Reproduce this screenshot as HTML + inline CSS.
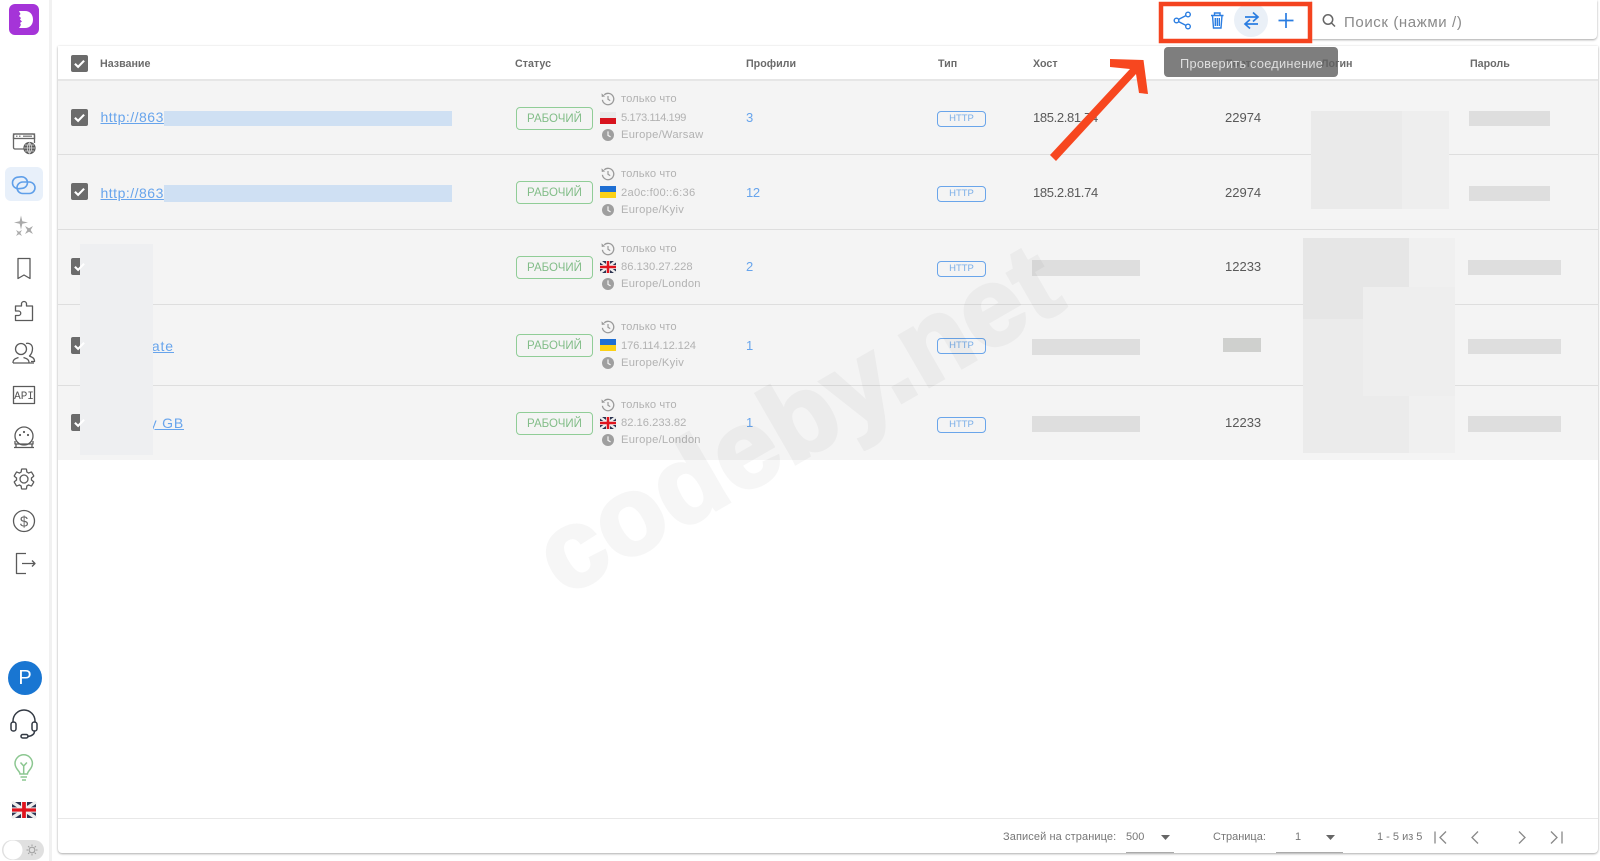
<!DOCTYPE html>
<html lang="ru">
<head>
<meta charset="utf-8">
<title>Прокси</title>
<style>
html,body{margin:0;padding:0;background:#fff}
#p{position:relative;width:1600px;height:861px;overflow:hidden;background:#fff;font-family:"Liberation Sans",sans-serif;color:#555}
#p div,#p a,#p span.a{position:absolute}
.t{white-space:nowrap;line-height:16px;height:16px}
.h{font-size:10.700px;font-weight:bold;color:#6b6b6b;top:56px}
.row{left:58px;width:1540px;background:#f4f4f4;border-bottom:1px solid #dedede;box-sizing:border-box}
.cb{left:71px;width:17px;height:17px;background:#6b6b6b;border-radius:2px}
.lnk{color:#67a4ec;text-decoration:underline;font-size:14px;letter-spacing:.5px}
.st{left:516px;width:77px;height:23px;box-sizing:border-box;border:1.500px solid #90cd97;border-radius:4px;color:#82bd88;font-size:11.500px;line-height:22px;text-align:center}
.i{left:621px;font-size:11.200px;color:#b2b2b2;letter-spacing:.25px}
.n{left:746px;font-size:13px;color:#67a4ec}
.ht{left:937px;width:49px;height:16px;box-sizing:border-box;border:1.500px solid #6aa5ea;border-radius:4px;color:#7aaee8;font-size:9.500px;line-height:14px;text-align:center}
.v{font-size:13px;color:#595959}
.g{background:#dedede}
.f{font-size:11px;color:#777;top:829px}
</style>
</head>
<body>
<div id="p">
  <!-- sidebar + card -->
  <div style="left:49px;top:0;width:3px;height:861px;background:#f1f1f1"></div>
  <div style="left:58px;top:46px;width:1540px;height:807px;background:#fff;border-radius:0 0 4px 4px;box-shadow:0 1px 2px rgba(0,0,0,.3),0 0 2px rgba(0,0,0,.08)"></div>
  <div style="left:58px;top:818px;width:1540px;height:1px;background:#e8e8e8"></div>
  <div style="left:58px;top:79px;width:1540px;height:2px;background:#e6e6e6"></div>

  <!-- rows -->
  <div class="row" style="top:81px;height:74px"></div>
  <div class="row" style="top:155px;height:75px"></div>
  <div class="row" style="top:230px;height:75px"></div>
  <div class="row" style="top:305px;height:81px"></div>
  <div class="row" style="top:386px;height:74px;border-bottom:0"></div>

  <!-- header -->
  <div class="cb" style="top:55px"></div>
  <div class="t h" style="left:100px">Название</div>
  <div class="t h" style="left:515px">Статус</div>
  <div class="t h" style="left:746px">Профили</div>
  <div class="t h" style="left:938px">Тип</div>
  <div class="t h" style="left:1033px">Хост</div>
  <div class="t h" style="left:1225px">Порт</div>
  <div class="t h" style="left:1321px">Логин</div>
  <div class="t h" style="left:1470px">Пароль</div>

  <!-- checkboxes -->
  <div class="cb" style="top:109px"></div>
  <div class="cb" style="top:183px"></div>
  <div class="cb" style="top:258px"></div>
  <div class="cb" style="top:337px"></div>
  <div class="cb" style="top:414px"></div>

  <!-- names -->
  <a class="t lnk" style="left:100.500px;top:109px">http://863</a>
  <div style="left:164px;top:111px;width:288px;height:15px;background:#cfe0f3"></div>
  <a class="t lnk" style="left:100.500px;top:185px">http://863</a>
  <div style="left:164px;top:185px;width:288px;height:17px;background:#cfe0f3"></div>
  <a class="t lnk" style="right:1426px;top:338px;letter-spacing:.9px">state</a>
  <a class="t lnk" style="right:1416px;top:415px;letter-spacing:.8px">proxy GB</a>
  <div style="left:80px;top:244px;width:73px;height:211px;background:#eeeff1"></div>

  <!-- statuses -->
  <div class="st" style="top:107px">РАБОЧИЙ</div>
  <div class="st" style="top:181px">РАБОЧИЙ</div>
  <div class="st" style="top:256px">РАБОЧИЙ</div>
  <div class="st" style="top:334px">РАБОЧИЙ</div>
  <div class="st" style="top:412px">РАБОЧИЙ</div>

  <!-- info -->
  <div class="t i" style="top:91px;letter-spacing:.1px">только что</div><div class="t i" style="top:110px;letter-spacing:-.45px">5.173.114.199</div><div class="t i" style="top:127px">Europe/Warsaw</div>
  <div class="t i" style="top:166px;letter-spacing:.1px">только что</div><div class="t i" style="top:185px">2a0c:f00::6:36</div><div class="t i" style="top:202px">Europe/Kyiv</div>
  <div class="t i" style="top:241px;letter-spacing:.1px">только что</div><div class="t i" style="top:259px;letter-spacing:0">86.130.27.228</div><div class="t i" style="top:276px">Europe/London</div>
  <div class="t i" style="top:319px;letter-spacing:.1px">только что</div><div class="t i" style="top:338px;letter-spacing:-.15px">176.114.12.124</div><div class="t i" style="top:355px">Europe/Kyiv</div>
  <div class="t i" style="top:397px;letter-spacing:.1px">только что</div><div class="t i" style="top:415px;letter-spacing:0">82.16.233.82</div><div class="t i" style="top:432px">Europe/London</div>

  <!-- profiles -->
  <div class="t n" style="top:110px">3</div>
  <div class="t n" style="top:185px;letter-spacing:-.3px">12</div>
  <div class="t n" style="top:259px">2</div>
  <div class="t n" style="top:338px">1</div>
  <div class="t n" style="top:415px">1</div>

  <!-- type -->
  <div class="ht" style="top:111px">HTTP</div>
  <div class="ht" style="top:186px">HTTP</div>
  <div class="ht" style="top:261px">HTTP</div>
  <div class="ht" style="top:338px">HTTP</div>
  <div class="ht" style="top:417px">HTTP</div>

  <!-- host -->
  <div class="t v" style="left:1033px;top:110px;letter-spacing:-.35px">185.2.81.74</div>
  <div class="t v" style="left:1033px;top:185px;letter-spacing:-.35px">185.2.81.74</div>
  <div class="g" style="left:1032px;top:260px;width:108px;height:16px"></div>
  <div class="g" style="left:1032px;top:339px;width:108px;height:16px"></div>
  <div class="g" style="left:1032px;top:416px;width:108px;height:16px"></div>

  <!-- port -->
  <div class="t v" style="left:1225px;top:110px">22974</div>
  <div class="t v" style="left:1225px;top:185px">22974</div>
  <div class="t v" style="left:1225px;top:259px">12233</div>
  <div style="left:1223px;top:338px;width:38px;height:14px;background:#cfd0ce"></div>
  <div class="t v" style="left:1225px;top:415px">12233</div>

  <!-- login patches -->
  <div style="left:1311px;top:111px;width:91px;height:98px;background:#eaeaea"></div>
  <div style="left:1402px;top:111px;width:47px;height:98px;background:#eeeeee"></div>
  <div style="left:1303px;top:238px;width:106px;height:215px;background:#ebebeb"></div>
  <div style="left:1409px;top:238px;width:46px;height:215px;background:#f0f0f0"></div>
  <div style="left:1303px;top:238px;width:106px;height:49px;background:#e6e6e6"></div>
  <div style="left:1303px;top:287px;width:60px;height:32px;background:#e6e6e6"></div>
  <div style="left:1363px;top:287px;width:92px;height:109px;background:#eeeeee"></div>

  <!-- password -->
  <div class="g" style="left:1469px;top:111px;width:81px;height:15px"></div>
  <div class="g" style="left:1469px;top:186px;width:81px;height:15px"></div>
  <div class="g" style="left:1468px;top:260px;width:93px;height:15px"></div>
  <div class="g" style="left:1468px;top:339px;width:93px;height:15px"></div>
  <div class="g" style="left:1468px;top:416px;width:93px;height:16px"></div>

  <!-- search -->
  <div style="left:1312px;top:0;width:285px;height:39px;background:#fff;border-radius:0 0 4px 0;box-shadow:0 1px 2px rgba(0,0,0,.35)"></div>
  <div class="t" style="left:1344px;top:15px;font-size:15px;color:#8a8a8a;letter-spacing:.6px">Поиск (нажми /)</div>

  <!-- footer text -->
  <div class="t f" style="left:1003px;letter-spacing:.1px">Записей на странице:</div>
  <div class="t f" style="left:1126px">500</div>
  <div style="left:1126px;top:852px;width:48px;height:1px;background:#aaa"></div>
  <div class="t f" style="left:1213px">Страница:</div>
  <div class="t f" style="left:1295px">1</div>
  <div style="left:1276px;top:852px;width:67px;height:1px;background:#aaa"></div>
  <div class="t f" style="left:1377px">1 - 5 из 5</div>

  <!-- avatar -->
  <div style="left:8px;top:661px;width:34px;height:34px;border-radius:50%;background:#1976d2;color:#fff;font-size:20px;line-height:34px;text-align:center">P</div>

  <svg width="1600" height="861" viewBox="0 0 1600 861" style="position:absolute;left:0;top:0">
    <defs>
      <g id="hist"><path d="M-3.800-4.200A5.700 5.700 0 1 1-5.600.8" fill="none" stroke="#9a9a9a" stroke-width="1.300"/><path d="M-6.500-5.600l.3 3.600 3.400-.6z" fill="#9a9a9a"/><path d="M0-3V.3l2.200 1.300" fill="none" stroke="#9a9a9a" stroke-width="1.200"/></g>
      <g id="clock"><circle r="6" fill="#9f9f9f"/><path d="M0-3.600V.4l2.600 1.500" fill="none" stroke="#f4f4f4" stroke-width="1.200"/></g>
      <g id="ua"><rect width="16" height="6" fill="#1f6fd3"/><rect y="6" width="16" height="6" fill="#fcd116"/></g>
      <g id="pl"><rect width="16" height="6" fill="#eaeaea"/><rect y="6" width="16" height="6" fill="#d8141e"/></g>
      <g id="uk"><rect width="16" height="12" fill="#2b3350"/><path d="M0 0l16 12M16 0L0 12" stroke="#eee" stroke-width="2.400"/><path d="M8 0v12M0 6h16" stroke="#eee" stroke-width="4"/><path d="M8 0v12M0 6h16" stroke="#e0141e" stroke-width="2.500"/></g>
      <path id="chk" d="M-4.600.2-1.400 3.400 4.600-2.800" fill="none" stroke="#fff" stroke-width="2.100"/>
    </defs>

    <!-- logo -->
    <rect x="9" y="4" width="30" height="31" rx="6" fill="#a534d8"/>
    <path d="M19 11h6c5 0 8 3.500 8 8.500s-3 8.500-8 8.500h-6c1.600-2 2.500-3.500 1-5l2-1.500-2-2 1-1.500-2-2 1.500-2z" fill="#fff"/>

    <!-- checks -->
    <use href="#chk" x="79.500" y="63.500"/><use href="#chk" x="79.500" y="117.500"/><use href="#chk" x="79.500" y="191.500"/><use href="#chk" x="79.500" y="266.500"/><use href="#chk" x="79.500" y="345.500"/><use href="#chk" x="79.500" y="422.500"/>

    <!-- sidebar icons -->
    <g fill="none" stroke="#666" stroke-width="1.300">
      <path d="M24 149H15a1.500 1.500 0 0 1-1.500-1.500V135.500A1.500 1.500 0 0 1 15 134H33a1.500 1.500 0 0 1 1.500 1.500V143"/>
      <rect x="13.500" y="134" width="21" height="4.500" stroke="#666"/>
      <path d="M16 136.200h1.500M19 136.200h1.500M23 136.200h9" stroke-width="1.200"/>
      <circle cx="29.500" cy="148" r="5.500" fill="#5d5d5d" stroke="#5d5d5d"/>
      <path d="M24 148h11M29.500 142.500v11M25 145h9M25 151h9M29.500 142.500c-3 3-3 8 0 11M29.500 142.500c3 3 3 8 0 11" stroke="#ddd" stroke-width=".7"/>
    </g>
    <rect x="5" y="167" width="38" height="34" rx="6" fill="#e8f0fa"/>
    <g fill="none" stroke="#5f9fe9" stroke-width="1.600">
      <rect x="12.500" y="177" width="15" height="11.500" rx="5.700" transform="rotate(-6 20 183)"/>
      <rect x="17" y="182" width="18" height="11.500" rx="5.700"/>
    </g>
    <g fill="#aaaaaa">
      <path d="M21 215.500l1.300 5.700 5.700 1.300-5.700 1.300-1.300 5.700-1.300-5.700-5.700-1.300 5.700-1.300z"/>
      <path d="M16 230l3 1.700 3-1.700-1.700 3 1.700 3-3-1.700-3 1.700 1.700-3z"/>
      <path d="M25 226l4 2.300 4-2.300-2.300 4 2.300 4-4-2.300-4 2.300 2.300-4z"/>
    </g>
    <g fill="none" stroke="#5a5a5a" stroke-width="1.300" stroke-linejoin="round">
      <path d="M18 258.500h12v20l-6-3.500-6 3.500z"/>
      <path d="M15.500 306h6v-2a2.500 2.500 0 1 1 5 0v2h6v14.500h-17v-5h3a2.200 2.200 0 0 0 0-4.500h-3z"/>
      <circle cx="21" cy="349" r="5.500"/><path d="M13 363c0-3 1-4 5.500-5.500M29 363c0-3-1-4-5.500-5.500M13 363h21"/>
      <path d="M26 343.500c3-1 6.500 1 6.500 5s-1.500 6-3 7.500c2 1 5 1.500 5 5.500H31"/>
      <rect x="13.500" y="386.500" width="21" height="17"/>
      <circle cx="24" cy="436" r="9"/><path d="M15 441v3h18v-3M14 447.500h20M16 444v3.500M32 444v3.500"/>
      <path transform="translate(12,467)" d="M19.430 12.980c.04-.32.07-.64.07-.98s-.03-.66-.07-.98l2.110-1.650c.19-.15.24-.42.12-.64l-2-3.460c-.12-.22-.39-.3-.61-.22l-2.490 1c-.52-.4-1.080-.73-1.690-.98l-.38-2.650C14.460 2.180 14.250 2 14 2h-4c-.25 0-.46.18-.49.42l-.38 2.650c-.61.25-1.170.59-1.690.98l-2.490-1c-.23-.09-.49 0-.61.22l-2 3.460c-.13.22-.07.49.12.64l2.110 1.650c-.04.32-.07.65-.07.98s.03.66.07.98l-2.110 1.650c-.19.15-.24.42-.12.64l2 3.460c.12.22.39.3.61.22l2.490-1c.52.4 1.080.73 1.690.98l.38 2.650c.03.24.24.42.49.42h4c.25 0 .46-.18.49-.42l.38-2.650c.61-.25 1.170-.59 1.690-.98l2.490 1c.23.09.49 0 .61-.22l2-3.460c.12-.22.07-.49-.12-.64l-2.110-1.650z"/>
      <circle cx="24" cy="479" r="4"/>
      <circle cx="24" cy="521" r="10.500"/>
      <path d="M26 553.500H16.500v20H26M22 563.500h13M32 560.500l3 3-3 3"/>
    </g>
    <text x="24" y="399" text-anchor="middle" font-family="Liberation Mono,monospace" font-size="11" fill="#555">API</text>
    <text x="24" y="526.500" text-anchor="middle" font-family="Liberation Sans,sans-serif" font-size="15" fill="#666">$</text>
    <g fill="#5a5a5a"><circle cx="24" cy="432" r="1.100"/><circle cx="20" cy="435" r="1.100"/><circle cx="28" cy="435" r="1.100"/></g>

    <!-- headset -->
    <g fill="none" stroke="#333a44" stroke-width="1.500" stroke-linecap="round">
      <path d="M13 722v-1a11 11 0 0 1 22 0v1"/>
      <rect x="11" y="722" width="5" height="9" rx="2.300"/>
      <rect x="32" y="722" width="5" height="9" rx="2.300"/>
      <path d="M34.500 731c0 3.500-3 5-6.500 5.500"/>
      <rect x="21" y="734.500" width="7" height="3.500" rx="1.700"/>
    </g>
    <!-- bulb -->
    <g fill="none" stroke="#8cc791" stroke-width="1.500">
      <path d="M20 774c0-3-5-5-5-10.500a8.700 8.700 0 0 1 17.400 0c0 5.500-5 7.500-5 10.500z"/>
      <path d="M20.500 777h6.500M22 780h4M23.700 774v-8M20.500 762.500l3.200 3.500 3.200-3.500"/>
    </g>
    <!-- sidebar flag -->
    <use href="#uk" transform="translate(12,802) scale(1.500,1.330)"/>
    <!-- theme toggle -->
    <rect x="2" y="840" width="42" height="20" rx="10" fill="#e0e0e0"/>
    <circle cx="13" cy="850" r="9.500" fill="#fff"/>
    <g stroke="#a0a0a0" stroke-width="1" fill="none">
      <circle cx="32" cy="850" r="2.800"/>
      <path d="M32 844.500v1.800M32 853.700v1.800M26.500 850h1.800M35.700 850h1.800M28.100 846.100l1.300 1.300M34.600 852.600l1.300 1.300M28.100 853.900l1.300-1.300M34.600 847.400l1.300-1.300"/>
    </g>

    <!-- row icons -->
    <use href="#hist" x="608" y="99"/><use href="#pl" x="600" y="112"/><use href="#clock" x="608" y="135"/>
    <use href="#hist" x="608" y="174"/><use href="#ua" x="600" y="186"/><use href="#clock" x="608" y="210"/>
    <use href="#hist" x="608" y="249"/><use href="#uk" x="600" y="261"/><use href="#clock" x="608" y="284"/>
    <use href="#hist" x="608" y="327"/><use href="#ua" x="600" y="339"/><use href="#clock" x="608" y="363"/>
    <use href="#hist" x="608" y="405"/><use href="#uk" x="600" y="417"/><use href="#clock" x="608" y="440"/>

    <!-- watermark -->
    <g opacity=".03"><text x="564" y="597" transform="rotate(-30 564 597)" font-family="Liberation Sans,sans-serif" font-weight="bold" font-size="110" fill="#000" stroke="#000" stroke-width="4" letter-spacing="1">codeby.net</text></g>

    <!-- top toolbar icons -->
    <circle cx="1251" cy="20" r="17" fill="#eaf0f7"/>
    <g fill="none" stroke="#2a7de1" stroke-width="1.400">
      <circle cx="1176.500" cy="20.500" r="2.300"/><circle cx="1188" cy="14.500" r="2.300"/><circle cx="1188" cy="26.500" r="2.300"/>
      <path d="M1178.600 19.400l7.300-3.800M1178.600 21.600l7.300 3.800"/>
      <path d="M1211 15.500h12.500M1214.500 15.500v-2.500h5.500v2.500M1212.500 15.500l1 12.500h7.500l1-12.500M1215.300 18v8M1217.300 18v8M1219.300 18v8"/>
    </g>
    <g fill="none" stroke="#2a7de1" stroke-width="1.700">
      <path d="M1245 17h13M1253 12.500l5 4.500-5 4.500M1258 24h-13M1250 19.500l-5 4.500 5 4.500"/>
      <path d="M1278.500 20.500h15M1286 13v15"/>
    </g>
    <g fill="none" stroke="#666" stroke-width="1.500">
      <circle cx="1328" cy="19.500" r="4.700"/><path d="M1331.500 23l3.500 3.500"/>
    </g>

    <!-- footer carets & nav -->
    <path d="M1161 835h9l-4.500 5z" fill="#666"/>
    <path d="M1326 835h9l-4.500 5z" fill="#666"/>
    <g fill="none" stroke="#888" stroke-width="1.300">
      <path d="M1435 831.500v12M1446 831.500l-6 6 6 6M1478 831.500l-6 6 6 6M1519 831.500l6 6-6 6M1551 831.500l6 6-6 6M1562 831.500v12"/>
    </g>

    <!-- red box -->
    <rect x="1161" y="4" width="149" height="37" fill="none" stroke="#f4431f" stroke-width="4.500"/>
    <!-- arrow -->
    <path d="M1110 59l33.500 1 4.500 34-9-1-3-19-80 87-6-6 80-86-20-2z" fill="#f7471f"/>
  </svg>

  <!-- tooltip -->
  <div style="left:1164px;top:47px;width:174px;height:30px;background:rgba(97,97,97,.82);border-radius:4px"></div>
  <div class="t" style="left:1180px;top:56px;font-size:12.800px;color:#dfdfdf;letter-spacing:.25px">Проверить соединение</div>
</div>
</body>
</html>
